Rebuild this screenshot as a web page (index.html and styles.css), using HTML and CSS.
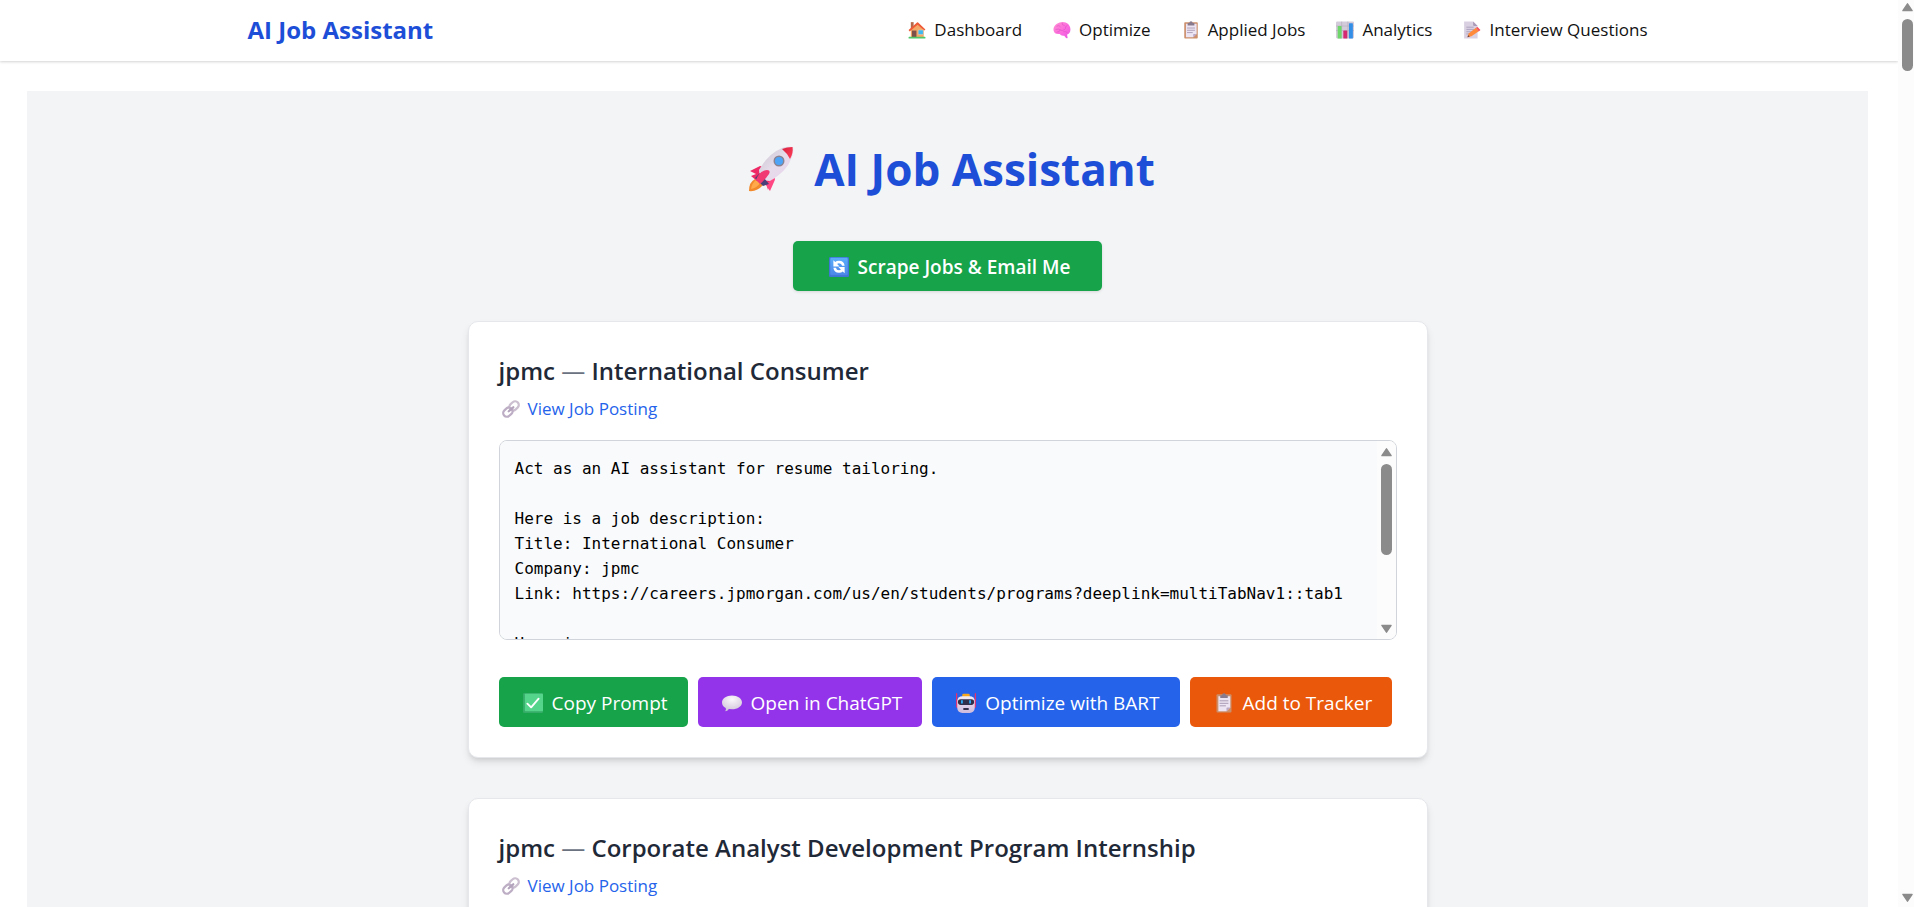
FILE: index.html
```
<!DOCTYPE html>
<html lang="en">
<head>
<meta charset="utf-8">
<title>AI Job Assistant</title>
<link rel="stylesheet" href="styles.css">
</head>
<body>
<svg class="sprite" aria-hidden="true">
  <defs>
    <linearGradient id="g-brain" x1="0" y1="0" x2="1" y2="1"><stop offset="0" stop-color="#ff8fd0"/><stop offset=".6" stop-color="#fb69e0"/><stop offset="1" stop-color="#e455dc"/></linearGradient>
    <linearGradient id="g-rocket" x1="0" y1="0" x2="1" y2="1"><stop offset="0" stop-color="#c9c3cf"/><stop offset=".5" stop-color="#e6dcea"/><stop offset="1" stop-color="#e9d3ee"/></linearGradient>
    <linearGradient id="g-nose" x1="0" y1="0" x2="1" y2="1"><stop offset="0" stop-color="#d9203f"/><stop offset="1" stop-color="#ff3f58"/></linearGradient>
    <linearGradient id="g-sync" x1="0" y1="0" x2="0" y2="1"><stop offset="0" stop-color="#5aaefb"/><stop offset="1" stop-color="#4c86e8"/></linearGradient>
    <linearGradient id="g-bot" x1="0" y1="0" x2="0" y2="1"><stop offset="0" stop-color="#f4eef6"/><stop offset="1" stop-color="#cdb9dc"/></linearGradient>
    <radialGradient id="g-talk" cx=".5" cy=".25" r=".8"><stop offset="0" stop-color="#fbf8fc"/><stop offset="1" stop-color="#cfc2d8"/></radialGradient>
  </defs>
  <symbol id="i-house" viewBox="0 0 32 32">
    <rect x="5" y="2" width="5" height="11" fill="#b5694a"/>
    <path d="M5 15 17 5l11 10v14H5z" fill="#f3a868"/>
    <path d="M1 16 16 2.500q1-.8 2 0L31 15l-2 2L17 6.500 3 18.500z" fill="#ee5a35"/>
    <rect x="7" y="17" width="8" height="12" fill="#7d5149"/>
    <rect x="18" y="16" width="9" height="8" fill="#3cb8f5" stroke="#e9c9a8"/>
    <rect x="1" y="28" width="30" height="3" rx="1" fill="#4fc86a"/>
  </symbol>
  <symbol id="i-brain" viewBox="0 0 32 32">
    <path d="M1 17C0 9 6 3 15 2c9-1 16 5 16 13 0 5-3 8-6 9l1 6q-2 2-4-1l-2-3q-6 1-8-3C6 24 2 22 1 17z" fill="url(#g-brain)"/>
    <path d="M7 9q4-3 6 1m3-6q0 4 4 4m5 0q-4 1-3 5m-17 2q5-2 8 1t8-1m-8 1q-1 4-6 4m12-1q3-1 6 1" fill="none" stroke="#dc4fc0" stroke-width="1" stroke-linecap="round"/>
  </symbol>
  <symbol id="i-clip" viewBox="0 0 32 32">
    <rect x="4" y="2" width="24" height="29" rx="1.500" fill="#cc8f6b"/>
    <path d="M7 5h19v18l-6 6H7z" fill="#ece4f2"/>
    <path d="M26 23h-5q-1 0-1 1v5z" fill="#b9a7c6"/>
    <path d="M10 3.500h3q0-3 3-3t3 3h3V8H10z" fill="#877a8e"/>
    <path d="M9 12.500h14M9 16.500h14M9 20.500h10" stroke="#aa9bb5" stroke-width="1.600"/>
  </symbol>
  <symbol id="i-chart" viewBox="0 0 32 32">
    <rect x="0" y="1" width="32" height="30" rx="2" fill="#d3cbd9"/>
    <path d="M0 9h32M0 17h32M10 1v30M21 1v30" stroke="#b3aabb" stroke-width="1"/>
    <rect x="3" y="9" width="7" height="22" rx="1" fill="#6fd66b"/>
    <rect x="13" y="17" width="7" height="14" rx="1" fill="#d42a72"/>
    <rect x="23" y="4" width="7" height="27" rx="1" fill="#338ee8"/>
  </symbol>
  <symbol id="i-memo" viewBox="0 0 32 32">
    <path d="M2 1h16l8 8v22H2z" fill="#d9d0e2"/>
    <path d="M18 1v6q0 2 2 2h6z" fill="#aa9ab8"/>
    <path d="M6 11h13M6 15h14M6 19h10M6 23h7" stroke="#aa9ebb" stroke-width="1.500"/>
    <path d="m8 29 2-7 13-10 5 6-13 9z" fill="#ff8a3c"/>
    <path d="m23 12 3-1.500 5 5.500-3 2.500z" fill="#f4515d"/>
    <path d="m8 29 1-4 3 3z" fill="#6d4a48"/>
  </symbol>
  <symbol id="i-rocket" viewBox="0 0 46 46">
    <path d="M7 33q-6 3-6 12 8 1 14-6z" fill="#f28a2c"/>
    <path d="M8 34q-4 3-5 9 6-1 9-6z" fill="#ffa94a"/>
    <path d="m2 25 6 3-5 2 6 5 6-6 1-8-4-1z" fill="#ee2a66"/>
    <path d="m20 44 1-6 4-6v-6l-11 9 5 5z" fill="#f0306c"/>
    <path d="m18 38 8-6q2 0 0 4l-4 9-3-4z" fill="#ff4784"/>
    <path d="M34 2q5-2 11-1 1 6-2 12-4 12-21 22l-10-1-1-10Q20 8 34 2z" fill="url(#g-rocket)"/>
    <path d="M34 3q5-2 10.500-2 1 6-2.500 12-3-6-8-10z" fill="url(#g-nose)"/>
    <path d="m7 32 5-5 9 11-6 2z" fill="#4a3f78"/>
    <path d="M8 34q3-9 11-10 4 0 2 4-4 6-9 10z" fill="#f23a72"/>
    <circle cx="31" cy="15" r="5.500" fill="#8a8290"/>
    <circle cx="31" cy="15" r="4" fill="#4ea5f7"/>
  </symbol>
  <symbol id="i-sync" viewBox="0 0 32 32">
    <rect width="32" height="32" rx="2" fill="#3f75d4"/>
    <rect x="2" y="1" width="28" height="28" rx="2" fill="url(#g-sync)"/>
    <path d="M25 14q-1-8-9-8-4 0-6 2L7 5v10h10l-4-4q1-1 3-1 4 0 5 4zM7 17q1 8 9 8 4 0 6-2l3 3V16H15l4 4q-1 1-3 1-4 0-5-4z" fill="#fff"/>
  </symbol>
  <symbol id="i-link" viewBox="0 0 32 32">
    <g fill="none" stroke-width="4">
      <rect x="12.500" y="4" width="18" height="13" rx="6.500" transform="rotate(-42 21.500 10.500)" stroke="#cbbfd0"/>
      <rect x="1.500" y="15" width="18" height="13" rx="6.500" transform="rotate(-42 10.500 21.500)" stroke="#bdaec5"/>
      <path d="m12 20 8-7" stroke="#b3a3bc" stroke-linecap="round"/>
    </g>
  </symbol>
  <symbol id="i-check" viewBox="0 0 32 32">
    <rect width="32" height="32" rx="2" fill="#35ad68"/>
    <rect x="3" y="1" width="29" height="28" rx="1" fill="#55d48b"/>
    <path d="m7 17 6 6L25 9" fill="none" stroke="#fff" stroke-width="3" stroke-linecap="round" stroke-linejoin="round"/>
  </symbol>
  <symbol id="i-talk" viewBox="0 0 32 32">
    <path d="M16 4c9 0 16 5 16 11s-7 11-16 11l-5-.5Q9 29 5 29q2-2 1-5-6-3-6-9C0 9 7 4 16 4z" fill="url(#g-talk)"/>
  </symbol>
  <symbol id="i-bot" viewBox="0 0 32 32">
    <path d="M1 1v12M31 1v12" stroke="#e8306c" stroke-width="2" stroke-linecap="round"/>
    <rect x="0" y="11" width="32" height="13" rx="3" fill="#d6347b"/>
    <rect x="10" y="1" width="12" height="6" rx="2" fill="#f5a61c"/>
    <rect x="2" y="5" width="28" height="27" rx="8" fill="url(#g-bot)"/>
    <rect x="3" y="10" width="26" height="9" rx="4.500" fill="#30304a"/>
    <rect x="8" y="11" width="3" height="6" rx="1.500" fill="#2da9f2"/>
    <rect x="21" y="11" width="3" height="6" rx="1.500" fill="#2da9f2"/>
    <rect x="11.500" y="24" width="9" height="3" rx="1" fill="#34304a"/>
  </symbol>
  <symbol id="i-arrow" viewBox="0 0 12 10">
    <path d="M6 1.500 11 9H1z" fill="#8b8b8b" stroke="#8b8b8b" stroke-width="1.500" stroke-linejoin="round"/>
  </symbol>
</svg>

<div class="window">
  <div class="page">
    <header class="topbar">
      <div class="topbar-inner">
        <a class="brand" href="#">AI Job Assistant</a>
        <nav class="nav">
          <a class="nav-link" href="#"><svg class="icon" aria-hidden="true"><use href="#i-house"/></svg>Dashboard</a>
          <a class="nav-link" href="#"><svg class="icon" aria-hidden="true"><use href="#i-brain"/></svg>Optimize</a>
          <a class="nav-link" href="#"><svg class="icon" aria-hidden="true"><use href="#i-clip"/></svg>Applied Jobs</a>
          <a class="nav-link" href="#"><svg class="icon" aria-hidden="true"><use href="#i-chart"/></svg>Analytics</a>
          <a class="nav-link" href="#"><svg class="icon" aria-hidden="true"><use href="#i-memo"/></svg>Interview Questions</a>
        </nav>
      </div>
    </header>
    <main class="main">
      <h1 class="hero"><svg class="icon icon-hero" aria-hidden="true"><use href="#i-rocket"/></svg>AI Job Assistant</h1>
      <button class="btn btn-scrape" type="button"><svg class="icon icon-btn" aria-hidden="true"><use href="#i-sync"/></svg>Scrape Jobs &amp; Email Me</button>
      <article class="card">
        <h2 class="card-title">jpmc <span class="dash">—</span> International Consumer</h2>
        <a class="posting" href="#"><svg class="icon" aria-hidden="true"><use href="#i-link"/></svg>View Job Posting</a>
        <div class="prompt">
          <textarea class="prompt-text" aria-label="Prompt for International Consumer" readonly>Act as an AI assistant for resume tailoring.

Here is a job description:
Title: International Consumer
Company: jpmc
Link: https://careers.jpmorgan.com/us/en/students/programs?deeplink=multiTabNav1::tab1

Here is</textarea>
          <div class="scrollbar scrollbar-box" aria-hidden="true">
            <svg class="arrow"><use href="#i-arrow"/></svg>
            <div class="track"><div class="thumb"></div></div>
            <svg class="arrow arrow-down"><use href="#i-arrow"/></svg>
          </div>
        </div>
        <div class="actions">
          <button class="btn btn-green" type="button"><svg class="icon icon-btn" aria-hidden="true"><use href="#i-check"/></svg>Copy Prompt</button>
          <button class="btn btn-purple" type="button"><svg class="icon icon-btn" aria-hidden="true"><use href="#i-talk"/></svg>Open in ChatGPT</button>
          <button class="btn btn-blue" type="button"><svg class="icon icon-btn" aria-hidden="true"><use href="#i-bot"/></svg>Optimize with BART</button>
          <button class="btn btn-orange" type="button"><svg class="icon icon-btn" aria-hidden="true"><use href="#i-clip"/></svg>Add to Tracker</button>
        </div>
      </article>
      <article class="card">
        <h2 class="card-title">jpmc <span class="dash">—</span> Corporate Analyst Development Program Internship</h2>
        <a class="posting" href="#"><svg class="icon" aria-hidden="true"><use href="#i-link"/></svg>View Job Posting</a>
      </article>
    </main>
  </div>
  <div class="scrollbar scrollbar-page" aria-hidden="true">
    <svg class="arrow"><use href="#i-arrow"/></svg>
    <div class="track"><div class="thumb"></div></div>
    <svg class="arrow arrow-down"><use href="#i-arrow"/></svg>
  </div>
</div>
</body>
</html>
```

FILE: styles.css
```
* { box-sizing: border-box; }

body {
  margin: 0;
  background: #fff;
  color: #000;
  font-family: "Open Sans", "Noto Sans", sans-serif;
  font-size: 16px;
}

.sprite { position: absolute; width: 0; height: 0; }

.window {
  display: grid;
  grid-template-columns: 1fr 16px;
  height: 100vh;
  overflow: hidden;
}

.page { min-width: 0; overflow: hidden; }

.topbar {
  padding: 0 30px 2px 27px;
  box-shadow: 0 1px 3px rgba(0, 0, 0, .12), 0 1px 2px rgba(0, 0, 0, .06);
}

.topbar-inner {
  display: flex;
  align-items: center;
  justify-content: space-between;
  max-width: 1400px;
  min-height: 59px;
  margin: 0 auto;
}

.brand {
  color: #1d4ed8;
  font-size: 24px;
  font-weight: 700;
  text-decoration: none;
}

.nav { display: flex; gap: 28px; }

.nav-link {
  display: flex;
  align-items: center;
  gap: 5px;
  color: #111;
  font-size: 17px;
  text-decoration: none;
}

.icon { width: 24px; height: 18px; flex: none; }
.icon-btn { width: 28px; height: 20px; }
.icon-hero { width: 62px; height: 46px; }

.main {
  display: flex;
  flex-direction: column;
  align-items: center;
  margin: 30px 30px 0 27px;
  padding: 50px 20px;
  background: #f3f4f6;
}

.hero {
  display: flex;
  align-items: center;
  gap: 12px;
  margin: 0 0 44px;
  color: #1d4ed8;
  font-size: 44px;
  font-weight: 700;
  line-height: 56px;
}

.btn {
  display: inline-flex;
  align-items: center;
  gap: 5px;
  min-height: 50px;
  padding: 2px 20px 0;
  border: 0;
  border-radius: 5px;
  color: #fff;
  font-family: inherit;
  font-size: 19px;
}

.btn-scrape {
  margin-bottom: 30px;
  padding: 2px 32px 0;
  background: #16a34a;
  font-weight: 600;
  box-shadow: 0 1px 3px rgba(0, 0, 0, .12);
}

.btn-green { background: #16a34a; }
.btn-purple { background: #9333ea; }
.btn-blue { background: #2563eb; }
.btn-orange { background: #ea580c; }

.card {
  width: 100%;
  max-width: 960px;
  margin-bottom: 40px;
  padding: 30px;
  border: 1px solid #e5e7eb;
  border-radius: 10px;
  background: #fff;
  box-shadow: 0 5px 8px -1px rgba(0, 0, 0, .1), 0 3px 5px -2px rgba(0, 0, 0, .1);
}

.card-title {
  margin: 0 0 7px;
  color: #1f2937;
  font-size: 24px;
  font-weight: 600;
  line-height: 37px;
}

.dash { color: #6b7280; font-weight: 400; }

.posting {
  display: flex;
  align-items: center;
  gap: 5px;
  width: fit-content;
  margin-bottom: 19px;
  color: #2563eb;
  font-size: 17px;
  line-height: 25px;
  text-decoration: none;
}

.prompt {
  display: flex;
  height: 200px;
  margin-bottom: 37px;
  overflow: hidden;
  border: 1px solid #d1d5db;
  border-radius: 8px;
}

.prompt-text {
  flex: 1;
  min-width: 0;
  padding: 15px;
  border: 0;
  outline: 0;
  overflow: hidden;
  resize: none;
  background: #f9fafb;
  color: #000;
  font-family: "DejaVu Sans Mono", monospace;
  font-size: 16px;
  line-height: 25px;
}

.actions { display: flex; flex-wrap: wrap; gap: 10px; }

.scrollbar {
  display: flex;
  flex-direction: column;
  background: #fcfcfc;
}

.scrollbar-page { padding: 2px 1px 4px 4px; }
.scrollbar-box { width: 19px; padding: 6px 4px 5px; }

.arrow { width: 11px; height: 10px; flex: none; }
.arrow-down { transform: rotate(180deg); }

.track { flex: 1; padding-top: 7px; }

.thumb { width: 11px; border-radius: 6px; background: #8b8b8b; }
.scrollbar-page .thumb { height: 52px; }
.scrollbar-box .thumb { height: 91px; }
```
